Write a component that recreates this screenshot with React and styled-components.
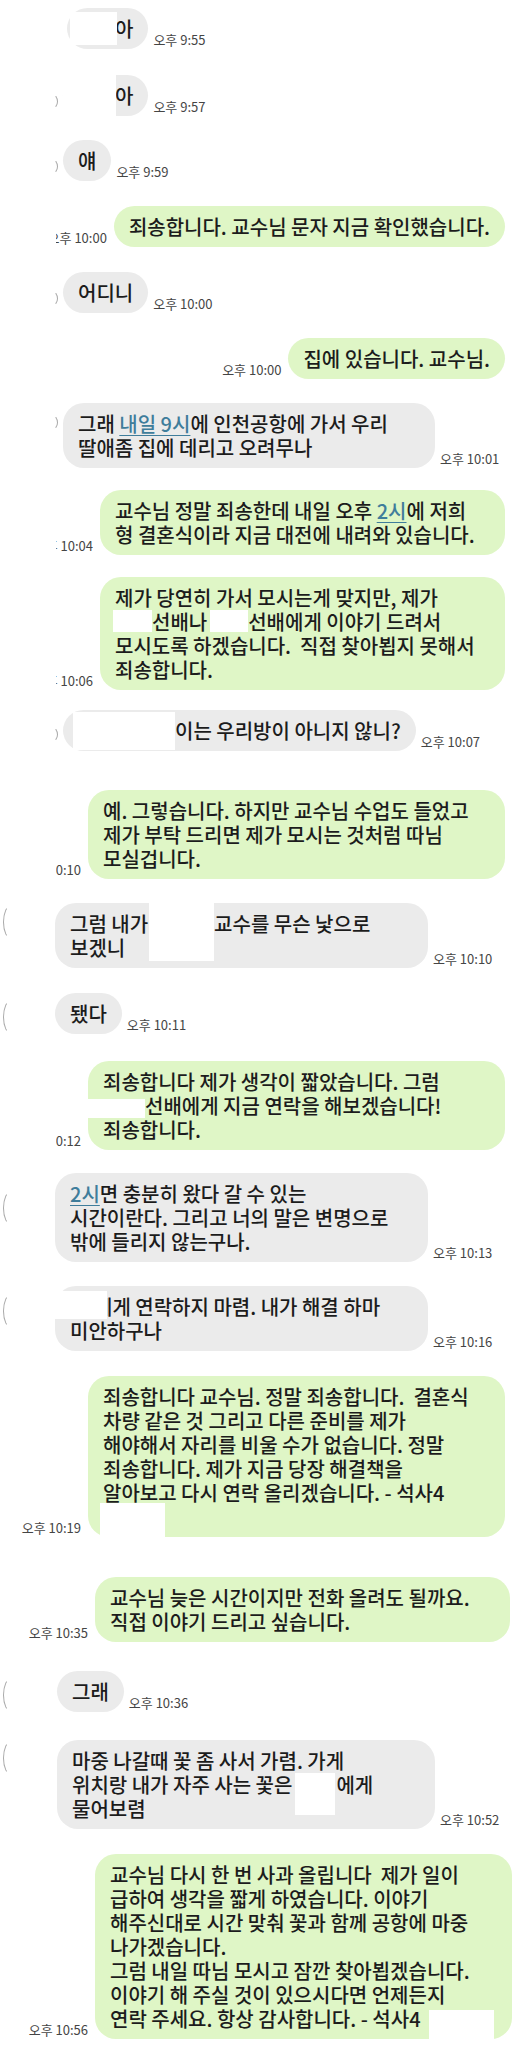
import React from "react";
import styled, { createGlobalStyle } from "styled-components";

const GlobalStyle = createGlobalStyle`
  body {
    margin: 0;
    background: #ffffff;
  }
  * {
    box-sizing: border-box;
  }
`;

const Chat = styled.div`
  width: 517px;
  min-height: 2048px;
  background: #ffffff;
  font-family: "Noto Sans CJK KR", "Noto Sans", sans-serif;
  display: flex;
  flex-direction: column;
  overflow: hidden;
`;

const Row = styled.div`
  display: flex;
  align-items: flex-end;
  justify-content: ${(p) => (p.$mine ? "flex-end" : "flex-start")};
  margin-top: ${(p) => p.$mt}px;
  padding-right: ${(p) => (p.$mine ? p.$pr ?? 12 : 0)}px;
`;

const Slot = styled.div`
  align-self: stretch;
  flex-shrink: 0;
  width: ${(p) => p.$w}px;
  display: flex;
  align-items: flex-start;
  justify-content: ${(p) => (p.$side === "right" ? "flex-end" : "flex-start")};
`;

const Arc = styled.span`
  display: block;
  margin-top: ${(p) => p.$top}px;
  width: ${(p) => (p.$side === "right" ? 12 : 16)}px;
  height: ${(p) => (p.$side === "right" ? 15 : 34)}px;
  margin-right: ${(p) => (p.$side === "right" ? 5 : 0)}px;
  margin-left: ${(p) => (p.$side === "right" ? 0 : 3)}px;
  border-radius: 50%;
  border: 1.5px solid transparent;
  border-${(p) => p.$side}-color: #a9a9a9;
`;

const Bubble = styled.div`
  position: relative;
  flex-shrink: 0;
  width: ${(p) => (p.$w ? `${p.$w}px` : "auto")};
  padding: 9px 15px 8px;
  border-radius: 21px;
  background: ${(p) => (p.$mine ? "#dff6c6" : "#ebebeb")};
  color: #1c1c1c;
  font-size: 20px;
  font-weight: 500;
  line-height: 24px;
  white-space: nowrap;
`;

const Blank = styled.span`
  position: relative;
  display: inline-block;
  width: ${(p) => p.$w}px;
  height: 24px;
  vertical-align: top;

  &::after {
    content: "";
    position: absolute;
    left: ${(p) => p.$l ?? 0}px;
    right: ${(p) => p.$r ?? 0}px;
    top: ${(p) => -(p.$t ?? 0)}px;
    bottom: ${(p) => -(p.$b ?? 0)}px;
    background: #ffffff;
  }
`;

const Link = styled.span`
  color: #3f7d9b;
  text-decoration: underline;
  text-underline-offset: 3px;
  text-decoration-thickness: 1px;
`;

const Time = styled.span`
  flex-shrink: 0;
  font-size: 13px;
  line-height: 15px;
  color: #454545;
  white-space: nowrap;
  margin: 0 ${(p) => (p.$mine ? 7 : 0)}px 2px ${(p) => (p.$mine ? 0 : 5)}px;
  ${(p) =>
    p.$clip &&
    `
    width: ${p.$clip}px;
    overflow: hidden;
    display: flex;
    justify-content: flex-end;
  `}
`;

const TimeText = styled.span`
  flex-shrink: 0;
`;

function Stamp({ mine, clip, children }) {
  return (
    <Time $mine={mine} $clip={clip}>
      <TimeText>{children}</TimeText>
    </Time>
  );
}

function In({ mt, slot, side, arcTop, w, time, children }) {
  return (
    <Row $mt={mt}>
      <Slot $w={slot} $side={side}>
        {side && <Arc $side={side} $top={arcTop} />}
      </Slot>
      <Bubble $w={w}>{children}</Bubble>
      <Stamp>{time}</Stamp>
    </Row>
  );
}

function Out({ mt, pr, w, time, clip, children }) {
  return (
    <Row $mine $mt={mt} $pr={pr}>
      <Stamp mine clip={clip}>
        {time}
      </Stamp>
      <Bubble $mine $w={w}>
        {children}
      </Bubble>
    </Row>
  );
}

export default function App() {
  return (
    <>
      <GlobalStyle />
      <Chat>
        <In mt={8} slot={67} time="오후 9:55">
          <Blank $w={33} $l={-12} $r={-2} $t={5} $b={4} />아
        </In>
        <In mt={26} slot={63} side="right" arcTop={19} time="오후 9:57">
          <Blank $w={37} $l={-15} $r={-1} $t={9} $b={8} />아
        </In>
        <In mt={24} slot={63} side="right" arcTop={19} time="오후 9:59">
          얘
        </In>
        <Out mt={25} time="오후 10:00" clip={51}>
          죄송합니다. 교수님 문자 지금 확인했습니다.
        </Out>
        <In mt={25} slot={63} side="right" arcTop={19} time="오후 10:00">
          어디니
        </In>
        <Out mt={25} time="오후 10:00">
          집에 있습니다. 교수님.
        </Out>
        <In mt={24} slot={63} side="right" arcTop={12} w={372} time="오후 10:01">
          그래 <Link>내일 9시</Link>에 인천공항에 가서 우리
          <br />
          딸애좀 집에 데리고 오려무나
        </In>
        <Out mt={22} w={405} time="오후 10:04" clip={37}>
          교수님 정말 죄송한데 내일 오후 <Link>2시</Link>에 저희
          <br />
          형 결혼식이라 지금 대전에 내려와 있습니다.
        </Out>
        <Out mt={22} w={405} time="오후 10:06" clip={37}>
          제가 당연히 가서 모시는게 맞지만, 제가
          <br />
          <Blank $w={37} $l={-2} $b={-2} />
          선배나
          <Blank $w={41} $l={3} $b={-2} />
          선배에게 이야기 드려서
          <br />
          모시도록 하겠습니다.&nbsp; 직접 찾아뵙지 못해서
          <br />
          죄송합니다.
        </Out>
        <In mt={20} slot={63} side="right" arcTop={17} time="오후 10:07">
          <Blank $w={97} $l={-5} $t={7} $b={7} />
          이는 우리방이 아니지 않니?
        </In>
        <Out mt={39} w={417} time="오후 10:10" clip={25}>
          예. 그렇습니다. 하지만 교수님 수업도 들었고
          <br />
          제가 부탁 드리면 제가 모시는 것처럼 따님
          <br />
          모실겁니다.
        </Out>
        <In mt={24} slot={55} side="left" arcTop={2} w={373} time="오후 10:10">
          그럼 내가
          <Blank $w={66} $l={1} $t={9} $b={25} />
          교수를 무슨 낯으로
          <br />
          보겠니
        </In>
        <In mt={24} slot={55} side="left" arcTop={8} time="오후 10:11">
          됐다
        </In>
        <Out mt={27} w={417} time="오후 10:12" clip={25}>
          죄송합니다 제가 생각이 짧았습니다. 그럼
          <br />
          <Blank $w={42} $l={-15} $t={-5} />
          선배에게 지금 연락을 해보겠습니다!
          <br />
          죄송합니다.
        </Out>
        <In mt={23} slot={55} side="left" arcTop={18} w={373} time="오후 10:13">
          <Link>2시</Link>면 충분히 왔다 갈 수 있는
          <br />
          시간이란다. 그리고 너의 말은 변명으로
          <br />
          밖에 들리지 않는구나.
        </In>
        <In mt={24} slot={55} side="left" arcTop={8} w={373} time="오후 10:16">
          <Blank $w={24} $l={-15} $r={-13} $t={4} />
          에게 연락하지 마렴. 내가 해결 하마
          <br />
          미안하구나
        </In>
        <Out mt={25} w={417} time="오후 10:19">
          죄송합니다 교수님. 정말 죄송합니다.&nbsp; 결혼식
          <br />
          차량 같은 것 그리고 다른 준비를 제가
          <br />
          해야해서 자리를 비울 수가 없습니다. 정말
          <br />
          죄송합니다. 제가 지금 당장 해결책을
          <br />
          알아보고 다시 연락 올리겠습니다. - 석사4
          <br />
          <Blank $w={62} $l={-3} $t={2} $b={9} />
        </Out>
        <Out mt={40} pr={7} w={415} time="오후 10:35">
          교수님 늦은 시간이지만 전화 올려도 될까요.
          <br />
          직접 이야기 드리고 싶습니다.
        </Out>
        <In mt={22} slot={57} side="left" arcTop={14} time="오후 10:36">
          그래
        </In>
        <In mt={28} slot={57} side="left" arcTop={1} w={378} time="오후 10:52">
          마중 나갈때 꽃 좀 사서 가렴. 가게
          <br />
          위치랑 내가 자주 사는 꽃은
          <Blank $w={44} $l={3} $r={1} $b={18} />
          에게
          <br />
          물어보렴
        </In>
        <Out mt={25} pr={5} w={417} time="오후 10:56">
          교수님 다시 한 번 사과 올립니다&nbsp; 제가 일이
          <br />
          급하여 생각을 짧게 하였습니다. 이야기
          <br />
          해주신대로 시간 맞춰 꽃과 함께 공항에 마중
          <br />
          나가겠습니다.
          <br />
          그럼 내일 따님 모시고 잠깐 찾아뵙겠습니다.
          <br />
          이야기 해 주실 것이 있으시다면 언제든지
          <br />
          연락 주세요. 항상 감사합니다. - 석사4
          <Blank $w={73} $l={8} $t={-3} $b={8} />
        </Out>
      </Chat>
    </>
  );
}
